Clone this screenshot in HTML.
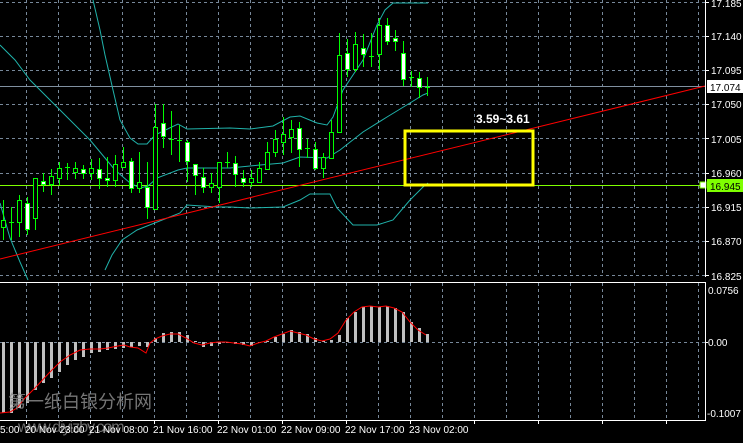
<!DOCTYPE html>
<html><head><meta charset="utf-8"><style>
html,body{margin:0;padding:0;background:#000;width:743px;height:443px;overflow:hidden}
svg{display:block}
text{font-family:"Liberation Sans",sans-serif}
</style></head><body>
<svg width="743" height="443" viewBox="0 0 743 443" xmlns="http://www.w3.org/2000/svg" shape-rendering="crispEdges">
<rect width="743" height="443" fill="#000"/>
<g stroke="#77889a" stroke-width="1" stroke-dasharray="3,3">
<line x1="0" y1="2.5" x2="705" y2="2.5"/><line x1="0" y1="36.5" x2="705" y2="36.5"/><line x1="0" y1="70.5" x2="705" y2="70.5"/><line x1="0" y1="104.5" x2="705" y2="104.5"/><line x1="0" y1="138.5" x2="705" y2="138.5"/><line x1="0" y1="173.5" x2="705" y2="173.5"/><line x1="0" y1="207.5" x2="705" y2="207.5"/><line x1="0" y1="241.5" x2="705" y2="241.5"/><line x1="0" y1="275.5" x2="705" y2="275.5"/>
<line x1="0" y1="342.5" x2="705" y2="342.5"/>
</g>
<g stroke="#77889a" stroke-width="1" stroke-dasharray="3,3">
<path d="M26.5 0V276M58.5 0V276M90.5 0V276M122.5 0V276M154.5 0V276M186.5 0V276M218.5 0V276M250.5 0V276M282.5 0V276M314.5 0V276M346.5 0V276M378.5 0V276M410.5 0V276M442.5 0V276M474.5 0V276M506.5 0V276M538.5 0V276M570.5 0V276M602.5 0V276M634.5 0V276M666.5 0V276M698.5 0V276"/>
<path d="M26.5 283V420M58.5 283V420M90.5 283V420M122.5 283V420M154.5 283V420M186.5 283V420M218.5 283V420M250.5 283V420M282.5 283V420M314.5 283V420M346.5 283V420M378.5 283V420M410.5 283V420M442.5 283V420M474.5 283V420M506.5 283V420M538.5 283V420M570.5 283V420M602.5 283V420M634.5 283V420M666.5 283V420M698.5 283V420"/>
</g>
<line x1="0" y1="86.5" x2="705" y2="86.5" stroke="#8090a0"/>
<line x1="0" y1="185.5" x2="705" y2="185.5" stroke="#7fff00"/>
<rect x="700" y="182" width="6" height="6" fill="#fff" stroke="#7fff00"/>
<g fill="none" stroke="#20b2aa" stroke-width="1" shape-rendering="auto">
<polyline points="93,0 100,30 105,55 113,90 120,120 130,138 138,144 147,144 155,135 178,124 187,129 230,128 250,129 273,126 290,117 300,116 317,123 327,125 333,117 343,90 363,60 377,25 385,10 393,3 428,3"/>
<polyline points="0,45 15,60 30,80 60,110 90,140 115,170 130,183 140,188 148,186 157,178 178,170 187,168 230,168 260,165 283,163 300,157 327,158 340,150 363,132 387,117 410,103 423,95 428,93"/>
<polyline points="0,203 10,238 20,262 28,280"/>
<polyline points="105,270 112,255 122,240 137,230 180,213 187,205 217,207 230,207 250,208 283,207 300,200 310,194 330,194 337,208 353,225 377,225 393,220 410,200 423,187 428,183"/>
</g>
<g stroke="#00ff00" stroke-width="1">
<path d="M3.5 200V240M11.5 207V240M19.5 195V237M27.5 197V235M35.5 178V230M43.5 173V192M51.5 169V195M59.5 162V185M67.5 163V180M75.5 162V179M83.5 165V179M91.5 159V180M99.5 158V189M107.5 157V187M115.5 155V187M123.5 147V167M131.5 158V193M139.5 152V193M147.5 162V219M155.5 104V209M163.5 104V148M171.5 111V155M179.5 125V162M187.5 140V182M195.5 164V195M203.5 168V193M211.5 173V193M219.5 162V203M227.5 152V168M235.5 156V187M243.5 170V187M251.5 170V187M259.5 162V182M267.5 142V170M275.5 130V157M283.5 117V155M291.5 120V153M299.5 122V167M307.5 139V158M315.5 142V170M323.5 153V178M331.5 120V158M339.5 33V132M347.5 39V77M355.5 32V72M363.5 34V67M371.5 33V67M379.5 18V70M387.5 18V45M395.5 30V51M403.5 41V86M411.5 71V87M419.5 72V98M427.5 77V96"/>
<path d="M9 222.5H14M65 167.5H70M169 139.5H174M177 140.5H182M225 162.5H230M305 148.5H310M369 56.5H374M409 77.5H414M425 87.5H430"/>
</g>
<g stroke="#00ff00" stroke-width="1" fill="#000">
<rect x="1.5" y="220.5" width="4" height="7"/><rect x="17.5" y="200.5" width="4" height="22"/><rect x="33.5" y="178.5" width="4" height="40"/><rect x="49.5" y="176.5" width="4" height="8"/><rect x="57.5" y="168.5" width="4" height="10"/><rect x="73.5" y="168.5" width="4" height="4"/><rect x="89.5" y="168.5" width="4" height="5"/><rect x="113.5" y="164.5" width="4" height="16"/><rect x="121.5" y="162.5" width="4" height="5"/><rect x="137.5" y="182.5" width="4" height="6"/><rect x="153.5" y="127.5" width="4" height="82"/><rect x="209.5" y="183.5" width="4" height="4"/><rect x="217.5" y="162.5" width="4" height="25"/><rect x="249.5" y="178.5" width="4" height="4"/><rect x="257.5" y="168.5" width="4" height="14"/><rect x="265.5" y="152.5" width="4" height="17"/><rect x="273.5" y="139.5" width="4" height="13"/><rect x="281.5" y="134.5" width="4" height="8"/><rect x="289.5" y="129.5" width="4" height="8"/><rect x="321.5" y="157.5" width="4" height="11"/><rect x="329.5" y="132.5" width="4" height="26"/><rect x="337.5" y="55.5" width="4" height="77"/><rect x="353.5" y="44.5" width="4" height="25"/><rect x="377.5" y="25.5" width="4" height="29"/>
</g>
<g stroke="#00ff00" stroke-width="1" fill="#fff">
<rect x="25.5" y="203.5" width="4" height="26"/><rect x="41.5" y="181.5" width="4" height="3"/><rect x="81.5" y="169.5" width="4" height="4"/><rect x="97.5" y="169.5" width="4" height="9"/><rect x="105.5" y="178.5" width="4" height="2"/><rect x="129.5" y="161.5" width="4" height="27"/><rect x="145.5" y="187.5" width="4" height="20"/><rect x="161.5" y="123.5" width="4" height="13"/><rect x="185.5" y="142.5" width="4" height="19"/><rect x="193.5" y="164.5" width="4" height="11"/><rect x="201.5" y="177.5" width="4" height="10"/><rect x="233.5" y="163.5" width="4" height="11"/><rect x="241.5" y="178.5" width="4" height="4"/><rect x="297.5" y="128.5" width="4" height="21"/><rect x="313.5" y="149.5" width="4" height="19"/><rect x="345.5" y="53.5" width="4" height="16"/><rect x="361.5" y="48.5" width="4" height="6"/><rect x="385.5" y="25.5" width="4" height="16"/><rect x="393.5" y="38.5" width="4" height="3"/><rect x="401.5" y="53.5" width="4" height="26"/><rect x="417.5" y="78.5" width="4" height="9"/>
</g>
<line x1="0" y1="259" x2="705" y2="86" stroke="#ff0000" stroke-width="1" shape-rendering="auto"/>
<rect x="405" y="131" width="128" height="54" fill="none" stroke="#ffff00" stroke-width="3"/>
<text x="476" y="123" fill="#fff" font-size="12" font-weight="bold">3.59~3.61</text>
<line x1="705.5" y1="0" x2="705.5" y2="277" stroke="#fff"/>
<g stroke="#fff"><path d="M705 2.5h4M705 36.5h4M705 70.5h4M705 104.5h4M705 138.5h4M705 173.5h4M705 207.5h4M705 241.5h4M705 275.5h4"/></g>
<g fill="#fff" font-size="10">
<text x="711" y="7">17.185</text><text x="711" y="40">17.140</text><text x="711" y="74">17.095</text><text x="711" y="108">17.050</text><text x="711" y="143">17.005</text><text x="711" y="177">16.960</text><text x="711" y="211">16.915</text><text x="711" y="245">16.870</text><text x="711" y="280">16.825</text>
</g>
<rect x="707" y="80" width="36" height="13" fill="#fff"/>
<text x="710" y="91" fill="#000" font-size="10">17.074</text>
<rect x="707" y="179" width="36" height="13" fill="#7fff00"/>
<text x="710" y="190" fill="#000" font-size="10">16.945</text>
<line x1="0" y1="282.5" x2="706" y2="282.5" stroke="#fff"/>
<line x1="0" y1="420.5" x2="706" y2="420.5" stroke="#fff"/>
<line x1="705.5" y1="282" x2="705.5" y2="421" stroke="#fff"/>
<g fill="#c0c0c0">
<rect x="2" y="342" width="3" height="71"/><rect x="10" y="342" width="3" height="71"/><rect x="18" y="342" width="3" height="66"/><rect x="26" y="342" width="3" height="61"/><rect x="34" y="342" width="3" height="48"/><rect x="42" y="342" width="3" height="41"/><rect x="50" y="342" width="3" height="36"/><rect x="58" y="342" width="3" height="30"/><rect x="66" y="342" width="3" height="23"/><rect x="74" y="342" width="3" height="18"/><rect x="82" y="342" width="3" height="15"/><rect x="90" y="342" width="3" height="11"/><rect x="98" y="342" width="3" height="10"/><rect x="106" y="342" width="3" height="8"/><rect x="114" y="342" width="3" height="7"/><rect x="122" y="342" width="3" height="6"/><rect x="130" y="342" width="3" height="5"/><rect x="138" y="342" width="3" height="4"/><rect x="146" y="342" width="3" height="5"/>
<rect x="154" y="338" width="3" height="4"/><rect x="162" y="333" width="3" height="9"/><rect x="170" y="332" width="3" height="10"/><rect x="178" y="332" width="3" height="10"/><rect x="186" y="335" width="3" height="7"/><rect x="194" y="341" width="3" height="1"/>
<rect x="202" y="342" width="3" height="5"/><rect x="210" y="342" width="3" height="4"/><rect x="218" y="342" width="3" height="2"/><rect x="226" y="342" width="3" height="1"/><rect x="234" y="342" width="3" height="2"/><rect x="242" y="342" width="3" height="3"/><rect x="250" y="342" width="3" height="4"/><rect x="258" y="342" width="3" height="1"/>
<rect x="266" y="341" width="3" height="1"/><rect x="274" y="337" width="3" height="5"/><rect x="282" y="334" width="3" height="8"/><rect x="290" y="330" width="3" height="12"/><rect x="298" y="332" width="3" height="10"/><rect x="306" y="334" width="3" height="8"/><rect x="314" y="338" width="3" height="4"/><rect x="322" y="341" width="3" height="1"/><rect x="330" y="340" width="3" height="2"/><rect x="338" y="335" width="3" height="7"/><rect x="346" y="318" width="3" height="24"/><rect x="354" y="312" width="3" height="30"/><rect x="362" y="307" width="3" height="35"/><rect x="370" y="306" width="3" height="36"/><rect x="378" y="307" width="3" height="35"/><rect x="386" y="306" width="3" height="36"/><rect x="394" y="308" width="3" height="34"/><rect x="402" y="312" width="3" height="30"/><rect x="410" y="322" width="3" height="20"/><rect x="418" y="328" width="3" height="14"/><rect x="426" y="334" width="3" height="8"/>
</g>
<polyline fill="none" stroke="#ff0000" stroke-width="1" shape-rendering="auto" points="0,413 10,412 17,408 25,398 35,388 50,372 60,362 70,355 80,350 90,349 100,349 108,348 118,346 124,345 130,347 138,348 146,353 150,343 155,339 162,336 170,334 178,334 186,338 194,343 202,345 210,343 218,342 226,342 234,343 242,344 250,346 258,343 266,341 274,337 282,334 290,331 298,333 306,335 314,339 322,341 330,339 338,333 346,320 354,312 362,307 370,306 378,307 386,306 394,308 402,312 410,322 418,330 426,335"/>
<g fill="#fff" font-size="10">
<text x="708" y="294">0.0756</text><text x="708" y="346">0.00</text><text x="707" y="417">-0.1007</text>
</g>
<g stroke="#fff"><path d="M705 342.5h3"/></g>
<text x="8" y="408" fill="#8a8a8a" font-size="18" font-family="'Liberation Sans','Noto Sans CJK SC',sans-serif" fill-opacity="0.85">第一纸白银分析网</text>
<text x="18" y="432" fill="#8a8a8a" font-size="16" font-family="'Liberation Mono',monospace" fill-opacity="0.8" letter-spacing="-1">www.diyizby.com</text>
<g stroke="#fff"><path d="M26.5 420v4M90.5 420v4M154.5 420v4M218.5 420v4M282.5 420v4M346.5 420v4M410.5 420v4M474.5 420v4M538.5 420v4M602.5 420v4M666.5 420v4"/></g>
<g fill="#fff" font-size="10">
<text x="0" y="433">5:00</text><text x="25" y="433">20 Nov 23:00</text><text x="89" y="433">21 Nov 08:00</text><text x="153" y="433">21 Nov 16:00</text><text x="217" y="433">22 Nov 01:00</text><text x="281" y="433">22 Nov 09:00</text><text x="345" y="433">22 Nov 17:00</text><text x="409" y="433">23 Nov 02:00</text>
</g>
</svg>
</body></html>
